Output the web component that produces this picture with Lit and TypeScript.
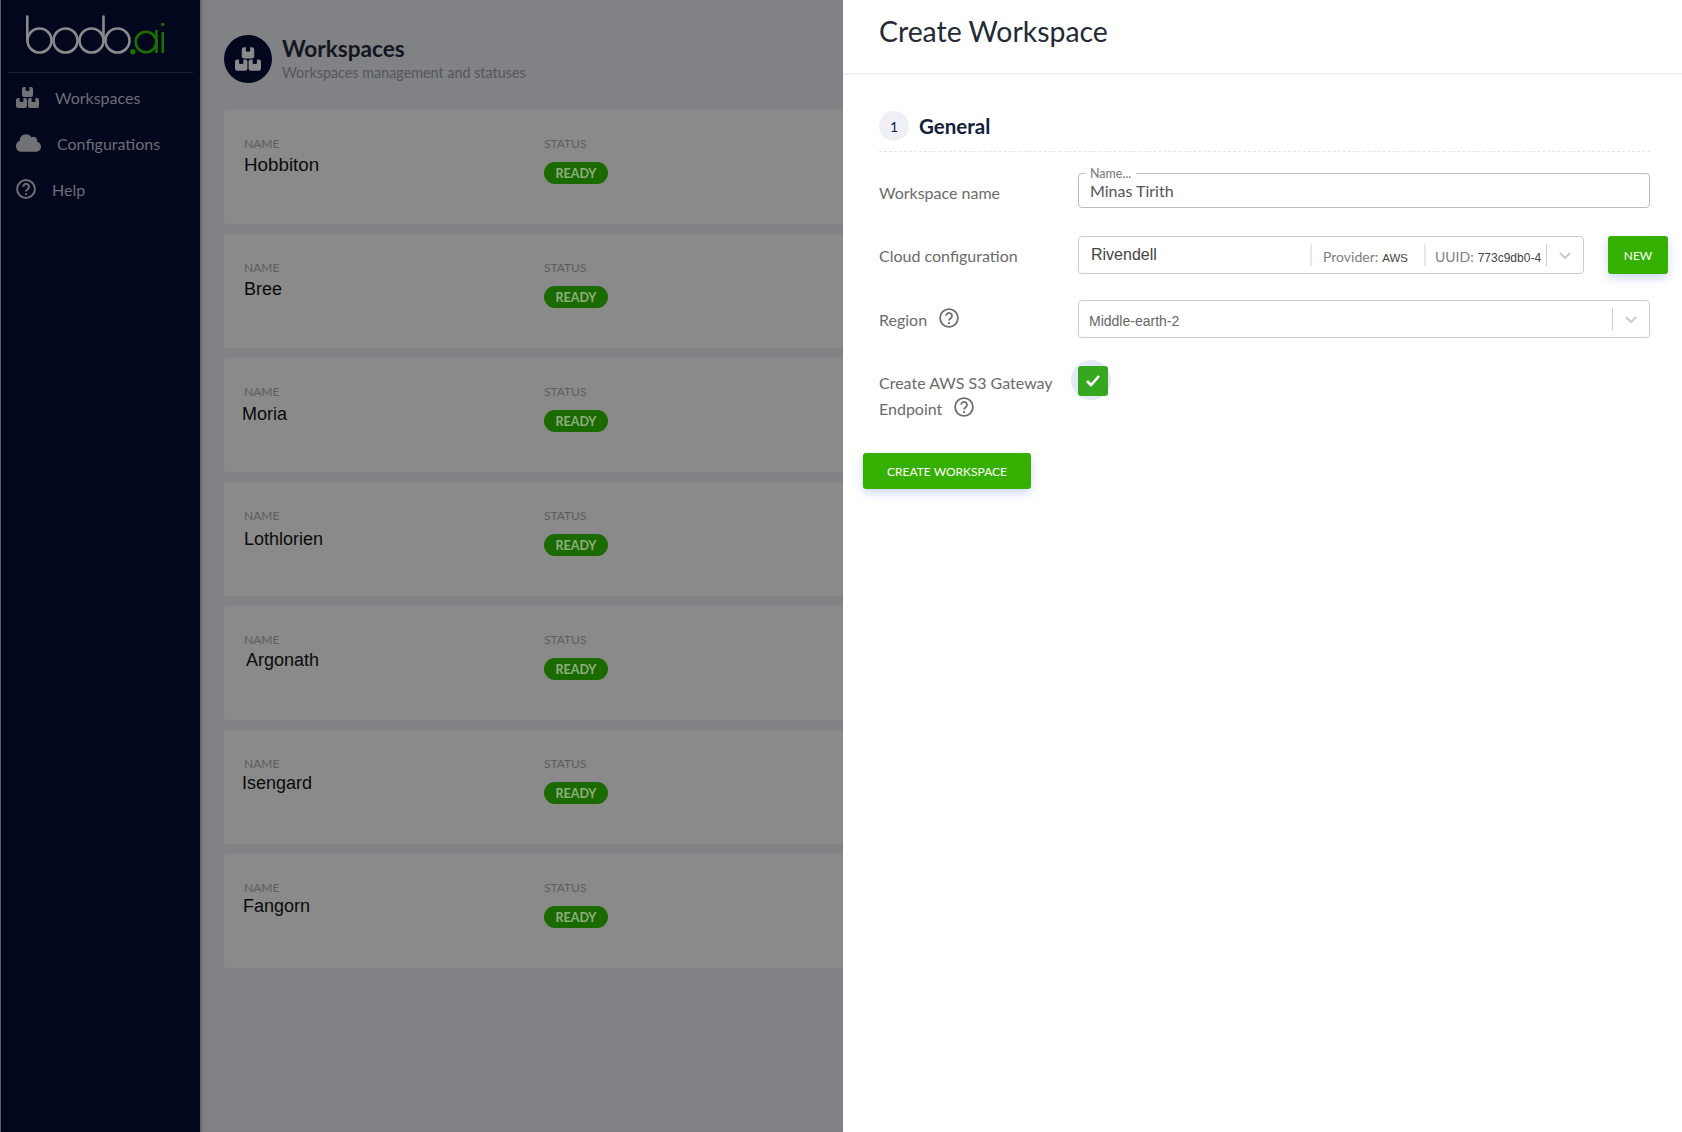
import { LitElement, html, css, svg } from 'lit';
import { customElement } from 'lit/decorators.js';

const BOX = 'M2 0H3.6V3a1 1 0 0 0 1 1h1.8a1 1 0 0 0 1-1V0H9a2 2 0 0 1 2 2v6a2 2 0 0 1-2 2H2a2 2 0 0 1-2-2V2a2 2 0 0 1 2-2z';

const boxes = (cls: string) => html`
  <svg class=${cls} viewBox="0 0 23 21" aria-hidden="true">
    <path d=${BOX} transform="translate(6 0)"></path>
    <path d=${BOX} transform="translate(0 11)"></path>
    <path d=${BOX} transform="translate(12 11)"></path>
  </svg>
`;

const help = (cls: string) => html`
  <svg class=${cls} viewBox="0 0 20 20" aria-hidden="true">
    <circle cx="10" cy="10" r="8.9"></circle>
    <path d="M7.2 7.8a2.9 2.9 0 1 1 4.5 2.4c-1 .7-1.7 1.2-1.7 2.4"></path>
    <circle class="dot" cx="10" cy="15.2" r="1.1"></circle>
  </svg>
`;

const chevron = () => html`
  <svg class="chevron" viewBox="0 0 14 8" aria-hidden="true"><path d="M1 1l6 6 6-6"></path></svg>
`;

const logo = svg`
  <g fill="none" stroke="#8a8a8c" stroke-width="2.6" stroke-linecap="round">
    <path d="M27.3 16.5V40.5"></path>
    <circle cx="39.5" cy="40.5" r="12"></circle>
    <circle cx="65.5" cy="40.5" r="12"></circle>
    <circle cx="91.5" cy="40.5" r="12"></circle>
    <path d="M103.5 16.5V40.5"></path>
    <circle cx="117.5" cy="40.5" r="12"></circle>
  </g>
  <g fill="none" stroke="#1a7000" stroke-width="2.6">
    <circle cx="146" cy="42" r="10.3"></circle>
    <path d="M156.5 30V53"></path>
    <path d="M162.8 32V53"></path>
  </g>
  <circle cx="132.8" cy="51.8" r="2.7" fill="#1a7000"></circle>
  <circle cx="162.8" cy="24.5" r="1.7" fill="#1a7000"></circle>
`;

// small per-row shifts, the names don't sit on one line in the original
const WORKSPACES = [
  { name: 'Hobbiton', dx: 0, dy: 0, size: 18.8 },
  { name: 'Bree', dx: 0, dy: 0, size: 18 },
  { name: 'Moria', dx: -2, dy: 1, size: 18 },
  { name: 'Lothlorien', dx: 0, dy: 2, size: 18 },
  { name: 'Argonath', dx: 2, dy: -1, size: 18 },
  { name: 'Isengard', dx: -2, dy: -2, size: 18 },
  { name: 'Fangorn', dx: -1, dy: -3, size: 18 },
];

@customElement('app-root')
export class AppRoot extends LitElement {
  static override styles = css`
    :host {
      display: block;
      position: relative;
      width: 1682px;
      height: 1132px;
      overflow: hidden;
      background: #808285;
      font-family: Lato, 'Open Sans', sans-serif;
    }
    .app {
      display: flex;
      height: 100%;
      border-left: 1px solid #5a5c62;
      box-sizing: border-box;
    }
    .sidebar {
      width: 199px;
      flex: none;
      background: #02071e;
    }
    .sidebar__logo {
      display: block;
      width: 199px;
      height: 72px;
    }
    .sidebar__nav {
      margin: 0 7px;
      padding-top: 1px;
      border-top: 1px solid #1c2134;
    }
    .nav-item {
      display: flex;
      align-items: center;
      gap: 16px;
      height: 46px;
      padding-left: 8px;
      font-size: 16px;
      color: #6c6e75;
    }
    .nav-item svg { flex: none; }
    .nav-icon { width: 23px; height: 21px; fill: #717276; }
    .nav-cloud { width: 25px; height: 18px; fill: #717276; }
    .nav-help { width: 20px; height: 20px; }
    .nav-help circle, .nav-help path { fill: none; stroke: #6f7074; stroke-width: 2; }
    .nav-help .dot { fill: #6f7074; stroke: none; }

    .main {
      flex: 1;
      min-width: 0;
      padding: 35px 0 0 24px;
      box-shadow: inset 4px 0 3px -2px rgba(0, 0, 0, .22);
    }
    .main__head {
      display: flex;
      align-items: center;
      gap: 10px;
      height: 48px;
      margin-bottom: 27px;
    }
    .main__badge {
      display: flex;
      align-items: center;
      justify-content: center;
      width: 48px;
      height: 48px;
      border-radius: 50%;
      background: #02071e;
    }
    .head-icon { width: 26px; height: 24px; fill: #8a8a8c; }
    .main__title {
      font-size: 22.6px;
      line-height: 28px;
      font-weight: 700;
      color: #13151f;
    }
    .main__sub {
      font-size: 14.35px;
      line-height: 20px;
      color: #55565a;
    }
    .cards {
      display: flex;
      flex-direction: column;
      gap: 10px;
      width: 1420px;
    }
    .card {
      display: grid;
      grid-template-columns: 300px 1fr;
      height: 114px;
      box-sizing: border-box;
      padding: 26px 20px 0;
      border-radius: 4px;
      background: #8a8a8a;
    }
    .card__label {
      font-size: 12px;
      line-height: 16px;
      color: #5c5d5f;
    }
    .card__name {
      font-family: 'Liberation Sans', Arial, sans-serif;
      line-height: 26px;
      color: #0a0a0a;
    }
    .badge {
      display: flex;
      align-items: center;
      justify-content: center;
      width: 64px;
      height: 22px;
      margin-top: 10px;
      border-radius: 11px;
      background: #1a6a00;
      color: #8fae80;
      font-size: 12.5px;
      font-weight: 700;
    }

    .drawer {
      position: absolute;
      top: 0;
      right: 0;
      bottom: 0;
      width: 839px;
      background: #fff;
    }
    .drawer__head {
      display: flex;
      align-items: center;
      height: 61px;
      padding: 0 0 12px 36px;
      border-bottom: 2px solid #f2f2f4;
      font-size: 28.4px;
      color: #232a36;
    }
    .drawer__body {
      position: relative;
      z-index: 0;
      padding: 36px 32px 0 36px;
    }
    .section {
      display: flex;
      align-items: center;
      gap: 10px;
      padding-bottom: 10px;
      border-bottom: 1px dashed #e6e6e8;
    }
    .section__num {
      display: flex;
      align-items: center;
      justify-content: center;
      width: 30px;
      height: 30px;
      border-radius: 50%;
      background: #eef0f6;
      font-size: 14px;
      color: #14213d;
    }
    .section__title {
      font-size: 20.5px;
      font-weight: 700;
      color: #14213d;
    }
    .row {
      display: grid;
      grid-template-columns: 199px 1fr;
      align-items: center;
    }
    .row--name { margin-top: 21px; }
    .row--cloud { margin-top: 28px; }
    .row--region { margin-top: 26px; }
    .row--check { margin-top: 28px; align-items: start; }
    .row__label {
      display: flex;
      align-items: center;
      gap: 12px;
      font-size: 16px;
      line-height: 26px;
      color: #6b6b6b;
    }
    .row--name .row__label { padding-top: 4px; }
    .row--cloud .row__label { padding-top: 2px; }
    .row--region .row__label { padding-top: 1px; }
    .row--region .row__label svg { margin-top: -3px; }
    .row__label--wrap {
      display: block;
      padding-top: 4px;
      width: 180px;
    }
    .row__label svg { width: 20px; height: 20px; flex: none; }
    .row__label--wrap svg { vertical-align: -2px; margin-left: 8px; }
    .q circle, .q path { fill: none; stroke: #6e6e6e; stroke-width: 1.8; }
    .q .dot { fill: #6e6e6e; stroke: none; }

    .outlined {
      position: relative;
      height: 35px;
      box-sizing: border-box;
      padding: 7px 11px 0;
      border: 1px solid #bbb;
      border-radius: 4px;
      font-size: 16px;
      line-height: 20px;
      color: #555;
    }
    .outlined__legend {
      position: absolute;
      top: -7px;
      left: 6px;
      padding: 0 5px;
      background: #fff;
      font-size: 12.5px;
      line-height: 14px;
      color: #777;
    }
    .cloud {
      display: flex;
      align-items: center;
      gap: 24px;
    }
    .select {
      display: flex;
      align-items: center;
      height: 38px;
      box-sizing: border-box;
      border: 1px solid #ccc;
      border-radius: 4px;
    }
    .select--cloud { width: 506px; flex: none; }
    .select__main {
      flex: 1;
      padding-left: 12px;
      font-family: 'Liberation Sans', Arial, sans-serif;
      font-size: 16px;
      color: #444;
    }
    .select__cell {
      display: flex;
      align-items: baseline;
      gap: 4px;
      height: 22px;
      line-height: 26px;
      border-left: 2px solid #e8e8e8;
      font-size: 14px;
      color: #808080;
      white-space: nowrap;
    }
    .select__cell b {
      font-family: 'Liberation Sans', Arial, sans-serif;
      font-size: 12px;
      font-weight: 400;
      color: #444;
    }
    .select__cell--provider b { font-size: 11.5px; }
    .select__cell--provider { width: 101px; padding-left: 11px; }
    .select__cell--uuid { width: 111px; padding-left: 9px; }
    .select__arrow {
      display: flex;
      align-items: center;
      justify-content: center;
      width: 36px;
      height: 22px;
      border-left: 1px solid #ccc;
    }
    .select__value {
      flex: 1;
      padding: 3px 0 0 10px;
      font-family: 'Liberation Sans', Arial, sans-serif;
      font-size: 14px;
      color: #666;
    }
    .chevron {
      width: 12px;
      height: 7px;
      fill: none;
      stroke: #ccc;
      stroke-width: 2.4;
    }
    .btn {
      border: 0;
      border-radius: 3px;
      background: #35b000;
      color: #fff;
      font-family: inherit;
      font-size: 12px;
      box-shadow: 0 4px 10px rgba(80, 110, 220, .28);
    }
    .btn--new { width: 60px; height: 38px; flex: none; }
    .btn--create {
      display: block;
      width: 168px;
      height: 36px;
      margin: 31px 0 0 -16px;
    }
    .check {
      position: relative;
      display: flex;
      align-items: center;
      justify-content: center;
      width: 30px;
      height: 30px;
      border-radius: 3px;
      background: #36a820;
    }
    /* focus halo behind the checkbox */
    .check::before {
      content: '';
      position: absolute;
      z-index: -1;
      left: -7px;
      top: -6px;
      width: 40px;
      height: 40px;
      border-radius: 50%;
      background: #e3eaf7;
    }
    .check svg {
      width: 16px;
      height: 13px;
      margin-top: -2px;
      fill: none;
      stroke: #fff;
      stroke-width: 2.6;
    }
  `;

  override render() {
    return html`
      <div class="app">
        <aside class="sidebar">
          <svg class="sidebar__logo" viewBox="1 0 199 72" role="img" aria-label="bodo.ai">${logo}</svg>
          <nav class="sidebar__nav">
            <div class="nav-item">${boxes('nav-icon')}<span>Workspaces</span></div>
            <div class="nav-item">
              <svg class="nav-cloud" viewBox="0 32 640 448" aria-hidden="true">
                <path d="M537.6 226.6c4.1-10.7 6.4-22.4 6.4-34.6 0-53-43-96-96-96-19.7 0-38.1 6-53.3 16.2C367 64.2 315.3 32 256 32c-88.4 0-160 71.6-160 160 0 2.7.1 5.4.2 8.1C40.2 219.8 0 273.2 0 336c0 79.5 64.5 144 144 144h368c70.7 0 128-57.3 128-128 0-61.9-44-113.6-102.4-125.4z"></path>
              </svg>
              <span>Configurations</span>
            </div>
            <div class="nav-item">${help('nav-help')}<span>Help</span></div>
          </nav>
        </aside>
        <main class="main">
          <header class="main__head">
            <div class="main__badge">${boxes('head-icon')}</div>
            <div>
              <div class="main__title">Workspaces</div>
              <div class="main__sub">Workspaces management and statuses</div>
            </div>
          </header>
          <div class="cards">
            ${WORKSPACES.map((w) => html`
              <section class="card">
                <div>
                  <div class="card__label">NAME</div>
                  <div class="card__name" style="margin:${w.dy}px 0 0 ${w.dx}px;font-size:${w.size}px">${w.name}</div>
                </div>
                <div>
                  <div class="card__label">STATUS</div>
                  <div class="badge">READY</div>
                </div>
              </section>
            `)}
          </div>
        </main>
      </div>
      <aside class="drawer">
        <div class="drawer__head">Create Workspace</div>
        <div class="drawer__body">
          <div class="section">
            <div class="section__num">1</div>
            <div class="section__title">General</div>
          </div>
          <div class="row row--name">
            <div class="row__label">Workspace name</div>
            <div class="outlined">
              <span class="outlined__legend">Name...</span>
              Minas Tirith
            </div>
          </div>
          <div class="row row--cloud">
            <div class="row__label">Cloud configuration</div>
            <div class="cloud">
              <div class="select select--cloud">
                <div class="select__main">Rivendell</div>
                <div class="select__cell select__cell--provider">Provider: <b>AWS</b></div>
                <div class="select__cell select__cell--uuid">UUID: <b>773c9db0-4</b></div>
                <div class="select__arrow">${chevron()}</div>
              </div>
              <button class="btn btn--new">NEW</button>
            </div>
          </div>
          <div class="row row--region">
            <div class="row__label">Region ${help('q')}</div>
            <div class="select">
              <div class="select__value">Middle-earth-2</div>
              <div class="select__arrow">${chevron()}</div>
            </div>
          </div>
          <div class="row row--check">
            <div class="row__label row__label--wrap">Create AWS S3 Gateway Endpoint ${help('q')}</div>
            <div class="check">
              <svg viewBox="0 0 16 13" aria-hidden="true"><path d="M2 7l4 4 8-9"></path></svg>
            </div>
          </div>
          <button class="btn btn--create">CREATE WORKSPACE</button>
        </div>
      </aside>
    `;
  }
}
